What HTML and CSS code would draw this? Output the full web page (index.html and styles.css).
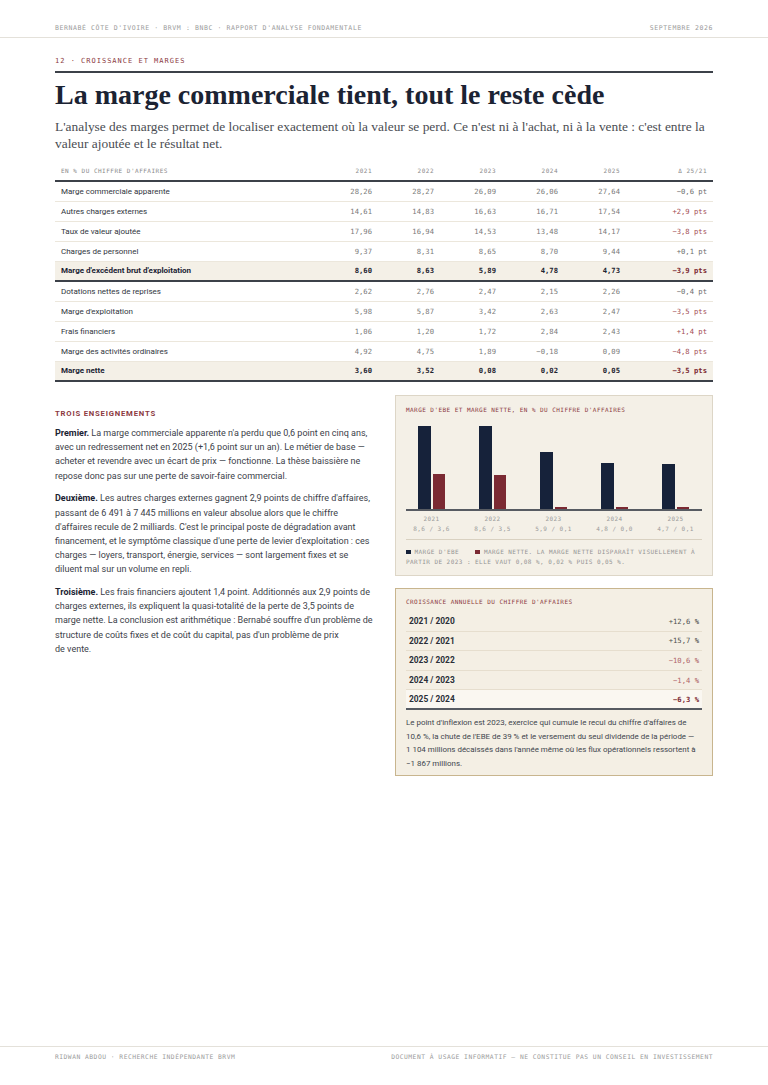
FILE: index.html
```html
<!DOCTYPE html>
<html lang="fr">
<head>
<meta charset="utf-8">
<title>Croissance et marges</title>
<link rel="stylesheet" href="styles.css">
</head>
<body>
<div class="page">
  <header class="topbar">
    <span>BERNABÉ CÔTE D'IVOIRE · BRVM : BNBC · RAPPORT D'ANALYSE FONDAMENTALE</span>
    <span>SEPTEMBRE 2026</span>
  </header>

  <main class="main">
    <div class="kicker">12 · CROISSANCE ET MARGES</div>
    <h1 class="title">La marge commerciale tient, tout le reste cède</h1>
    <p class="lede">L'analyse des marges permet de localiser exactement où la valeur se perd. Ce n'est ni à l'achat, ni à la vente : c'est entre la valeur ajoutée et le résultat net.</p>

    <table class="ratios">
      <thead>
        <tr>
          <th class="lbl">EN % DU CHIFFRE D'AFFAIRES</th>
          <th>2021</th><th>2022</th><th>2023</th><th>2024</th><th>2025</th>
          <th class="delta">Δ 25/21</th>
        </tr>
      </thead>
      <tbody>
        <tr><td class="lbl">Marge commerciale apparente</td><td>28,26</td><td>28,27</td><td>26,09</td><td>26,06</td><td>27,64</td><td class="delta">−0,6 pt</td></tr>
        <tr><td class="lbl">Autres charges externes</td><td>14,61</td><td>14,83</td><td>16,63</td><td>16,71</td><td>17,54</td><td class="delta bad">+2,9 pts</td></tr>
        <tr><td class="lbl">Taux de valeur ajoutée</td><td>17,96</td><td>16,94</td><td>14,53</td><td>13,48</td><td>14,17</td><td class="delta bad">−3,8 pts</td></tr>
        <tr><td class="lbl">Charges de personnel</td><td>9,37</td><td>8,31</td><td>8,65</td><td>8,70</td><td>9,44</td><td class="delta">+0,1 pt</td></tr>
        <tr class="key"><td class="lbl">Marge d'excédent brut d'exploitation</td><td>8,60</td><td>8,63</td><td>5,89</td><td>4,78</td><td>4,73</td><td class="delta bad">−3,9 pts</td></tr>
        <tr><td class="lbl">Dotations nettes de reprises</td><td>2,62</td><td>2,76</td><td>2,47</td><td>2,15</td><td>2,26</td><td class="delta">−0,4 pt</td></tr>
        <tr><td class="lbl">Marge d'exploitation</td><td>5,98</td><td>5,87</td><td>3,42</td><td>2,63</td><td>2,47</td><td class="delta bad">−3,5 pts</td></tr>
        <tr><td class="lbl">Frais financiers</td><td>1,06</td><td>1,20</td><td>1,72</td><td>2,84</td><td>2,43</td><td class="delta bad">+1,4 pt</td></tr>
        <tr><td class="lbl">Marge des activités ordinaires</td><td>4,92</td><td>4,75</td><td>1,89</td><td>−0,18</td><td>0,09</td><td class="delta bad">−4,8 pts</td></tr>
        <tr class="key"><td class="lbl">Marge nette</td><td>3,60</td><td>3,52</td><td>0,08</td><td>0,02</td><td>0,05</td><td class="delta bad">−3,5 pts</td></tr>
      </tbody>
    </table>

    <section class="cols">
      <div class="lessons">
        <h2 class="lessons-head">TROIS ENSEIGNEMENTS</h2>
        <p><strong>Premier.</strong> La marge commerciale apparente n'a perdu que 0,6 point en cinq ans, avec un redressement net en 2025 (+1,6 point sur un an). Le métier de base — acheter et revendre avec un écart de prix — fonctionne. La thèse baissière ne repose donc pas sur une perte de savoir-faire commercial.</p>
        <p><strong>Deuxième.</strong> Les autres charges externes gagnent 2,9 points de chiffre d'affaires, passant de 6&nbsp;491 à 7&nbsp;445 millions en valeur absolue alors que le chiffre d'affaires recule de 2 milliards. C'est le principal poste de dégradation avant financement, et le symptôme classique d'une perte de levier d'exploitation : ces charges — loyers, transport, énergie, services — sont largement fixes et se diluent mal sur un volume en repli.</p>
        <p><strong>Troisième.</strong> Les frais financiers ajoutent 1,4 point. Additionnés aux 2,9 points de charges externes, ils expliquent la quasi-totalité de la perte de 3,5 points de marge nette. La conclusion est arithmétique : Bernabé souffre d'un problème de structure de coûts fixes et de coût du capital, pas d'un problème de prix de&nbsp;vente.</p>
      </div>

      <div class="side">
        <figure class="chart">
          <figcaption class="box-title">MARGE D'EBE ET MARGE NETTE, EN % DU CHIFFRE D'AFFAIRES</figcaption>
          <div class="bars">
            <div class="group"><span class="bar ebe" style="height:82.6px"></span><span class="bar net" style="height:34.6px"></span></div>
            <div class="group"><span class="bar ebe" style="height:82.6px"></span><span class="bar net" style="height:33.6px"></span></div>
            <div class="group"><span class="bar ebe" style="height:56.6px"></span><span class="bar net" style="height:2px"></span></div>
            <div class="group"><span class="bar ebe" style="height:46.1px"></span><span class="bar net" style="height:2px"></span></div>
            <div class="group"><span class="bar ebe" style="height:45.1px"></span><span class="bar net" style="height:2px"></span></div>
          </div>
          <div class="labels">
            <div class="lab"><span>2021<br>8,6 / 3,6</span></div>
            <div class="lab"><span>2022<br>8,6 / 3,5</span></div>
            <div class="lab"><span>2023<br>5,9 / 0,1</span></div>
            <div class="lab"><span>2024<br>4,8 / 0,0</span></div>
            <div class="lab"><span>2025<br>4,7 / 0,1</span></div>
          </div>
          <p class="legend"><span class="sq sq-ebe"></span>MARGE D'EBE&nbsp;&nbsp;&nbsp;&nbsp;<span class="sq sq-net"></span>MARGE NETTE. LA MARGE NETTE DISPARAÎT VISUELLEMENT À PARTIR DE 2023 : ELLE VAUT 0,08 %, 0,02 % PUIS 0,05 %.</p>
        </figure>

        <div class="growth">
          <div class="box-title">CROISSANCE ANNUELLE DU CHIFFRE D'AFFAIRES</div>
          <ul class="g-rows">
            <li class="g-row"><span class="g-lbl">2021 / 2020</span><span class="g-val">+12,6 %</span></li>
            <li class="g-row"><span class="g-lbl">2022 / 2021</span><span class="g-val">+15,7 %</span></li>
            <li class="g-row"><span class="g-lbl">2023 / 2022</span><span class="g-val neg">−10,6 %</span></li>
            <li class="g-row"><span class="g-lbl">2024 / 2023</span><span class="g-val neg">−1,4 %</span></li>
            <li class="g-row last"><span class="g-lbl">2025 / 2024</span><span class="g-val worst">−6,3 %</span></li>
          </ul>
          <p class="g-note">Le point d'inflexion est 2023, exercice qui cumule le recul du chiffre d'affaires de 10,6&nbsp;%, la chute de l'EBE de 39&nbsp;% et le versement du seul dividende de la période — 1&nbsp;104 millions décaissés dans l'année même où les flux opérationnels ressortent à −1&nbsp;867 millions.</p>
        </div>
      </div>
    </section>
  </main>

  <footer class="footer">
    <span>RIDWAN ABDOU · RECHERCHE INDÉPENDANTE BRVM</span>
    <span>DOCUMENT À USAGE INFORMATIF — NE CONSTITUE PAS UN CONSEIL EN INVESTISSEMENT</span>
  </footer>
</div>
</body>
</html>
```

FILE: styles.css
```css
* { box-sizing: border-box; margin: 0; padding: 0; }

body {
  background: #ffffff;
  font-family: Roboto, "Noto Sans", sans-serif;
  color: #2f343c;
}

.page {
  min-height: 1085px;
  display: flex;
  flex-direction: column;
}

.topbar {
  display: flex;
  justify-content: space-between;
  padding: 24px 55px 4px;
  border-bottom: 1px solid #e4e1da;
  font: 6.5px/9px "DejaVu Sans Mono", monospace;
  letter-spacing: 0.6px;
  color: #9b9b9b;
}

.main { padding: 0 55px; }

.kicker {
  margin-top: 18px;
  padding-bottom: 5px;
  border-bottom: 2px solid #3c4149;
  font: 7px/10px "DejaVu Sans Mono", monospace;
  letter-spacing: 1px;
  color: #8c3a3f;
}

.title {
  margin-top: 5px;
  font: 700 28px/34px "Liberation Serif", serif;
  color: #1b2333;
}

.lede {
  margin-top: 6px;
  font: 13.4px/17px "Liberation Serif", serif;
  color: #4a4d53;
}

/* ratios table */
.ratios {
  width: 100%;
  margin-top: 8px;
  border-collapse: collapse;
  font: 7.2px "DejaVu Sans Mono", monospace;
}
.ratios th {
  height: 21px;
  padding: 0 6px;
  text-align: right;
  font-weight: 400;
  font-size: 6px;
  letter-spacing: 0.5px;
  color: #8a8a8a;
  border-bottom: 2px solid #3c4149;
  width: 62px;
}
.ratios th.lbl { width: auto; text-align: left; }
.ratios th.delta, .ratios td.delta { width: 87px; }
.ratios td {
  height: 20px;
  padding: 0 6px;
  text-align: right;
  color: #7a7a7a;
  border-bottom: 1px solid #ece7dc;
  white-space: nowrap;
}
.ratios td.lbl {
  text-align: left;
  font: 8px Roboto, "Noto Sans", sans-serif;
  color: #30353d;
}
.ratios td.delta { color: #6e6e6e; }
.ratios td.bad { color: #a34d54; }
.ratios tr.key td {
  background: #f4f0e7;
  font-weight: 700;
  color: #1e2430;
  border-bottom: 2px solid #3c4149;
}
.ratios tr.key td.lbl { font-weight: 700; color: #1b2333; }
.ratios tr.key td.bad { color: #7d2a32; }

/* lower columns */
.cols {
  display: grid;
  grid-template-columns: 1fr 1fr;
  gap: 22px;
  margin-top: 13px;
}

.lessons { padding-top: 14px; }
.lessons-head {
  font: 700 7.7px/10px Roboto, "Noto Sans", sans-serif;
  letter-spacing: 0.8px;
  color: #8c3a3f;
  margin-bottom: 7px;
}
.lessons p {
  font-size: 9px;
  line-height: 14.2px;
  color: #3c4149;
  margin-bottom: 8.5px;
}
.lessons strong { color: #1b2333; font-weight: 700; }

.box-title {
  font: 6px/10px "DejaVu Sans Mono", monospace;
  letter-spacing: 0.45px;
  color: #8c3a3f;
}

.chart {
  background: #f4f0e7;
  border: 1px solid #ddd6c7;
  padding: 9px 10px 8px;
}
.bars {
  margin-top: 5px;
  height: 91px;
  border-bottom: 2px solid #575b62;
  display: flex;
  justify-content: space-between;
  align-items: flex-end;
  padding: 0 13px 0 12px;
}
.group {
  width: 27px;
  display: flex;
  gap: 2px;
  align-items: flex-end;
}
.bar { display: block; width: 12.5px; }
.bar.ebe { background: #16223a; }
.bar.net { background: #7b2a33; }

.labels {
  display: flex;
  justify-content: space-between;
  padding: 0 13px 0 12px;
  margin-top: 3px;
}
.lab {
  width: 27px;
  display: flex;
  justify-content: center;
}
.lab span {
  white-space: nowrap;
  text-align: center;
  font: 6px/9.5px "DejaVu Sans Mono", monospace;
  letter-spacing: 0.45px;
  color: #9a9a9a;
}

.legend {
  margin-top: 6px;
  padding-top: 7px;
  border-top: 1px solid #d9d1c1;
  font: 6px/10px "DejaVu Sans Mono", monospace;
  letter-spacing: 0.45px;
  color: #959595;
}
.sq {
  display: inline-block;
  width: 4.5px;
  height: 4.5px;
  margin-right: 4px;
  vertical-align: 0;
}
.sq-ebe { background: #16223a; }
.sq-net { background: #7b2a33; }

.growth {
  margin-top: 12px;
  background: #f4efe4;
  border: 1.5px solid #c8b58e;
  padding: 8px 10px 4px;
}
.g-rows { list-style: none; margin-top: 5px; }
.g-row {
  display: flex;
  justify-content: space-between;
  align-items: center;
  height: 19.6px;
  padding: 0 3px;
  border-bottom: 1px solid #e6dece;
}
.g-lbl {
  font: 700 8.4px Roboto, "Noto Sans", sans-serif;
  color: #2a2f38;
}
.g-val {
  font: 7.2px "DejaVu Sans Mono", monospace;
  color: #4f4f4f;
}
.g-val.neg { color: #b0666a; }
.g-val.worst { color: #7d2a32; font-weight: 700; }
.g-row.last {
  background: #faf7f1;
  border-bottom: 2px solid #575b62;
}
.g-note {
  margin-top: 6px;
  font-size: 7.95px;
  line-height: 13.7px;
  color: #41464e;
}

.footer {
  margin-top: auto;
  display: flex;
  justify-content: space-between;
  padding: 5px 55px 24px;
  border-top: 1px solid #e4e1da;
  font: 6.3px/9px "DejaVu Sans Mono", monospace;
  letter-spacing: 0.5px;
  color: #9b9b9b;
}
```
